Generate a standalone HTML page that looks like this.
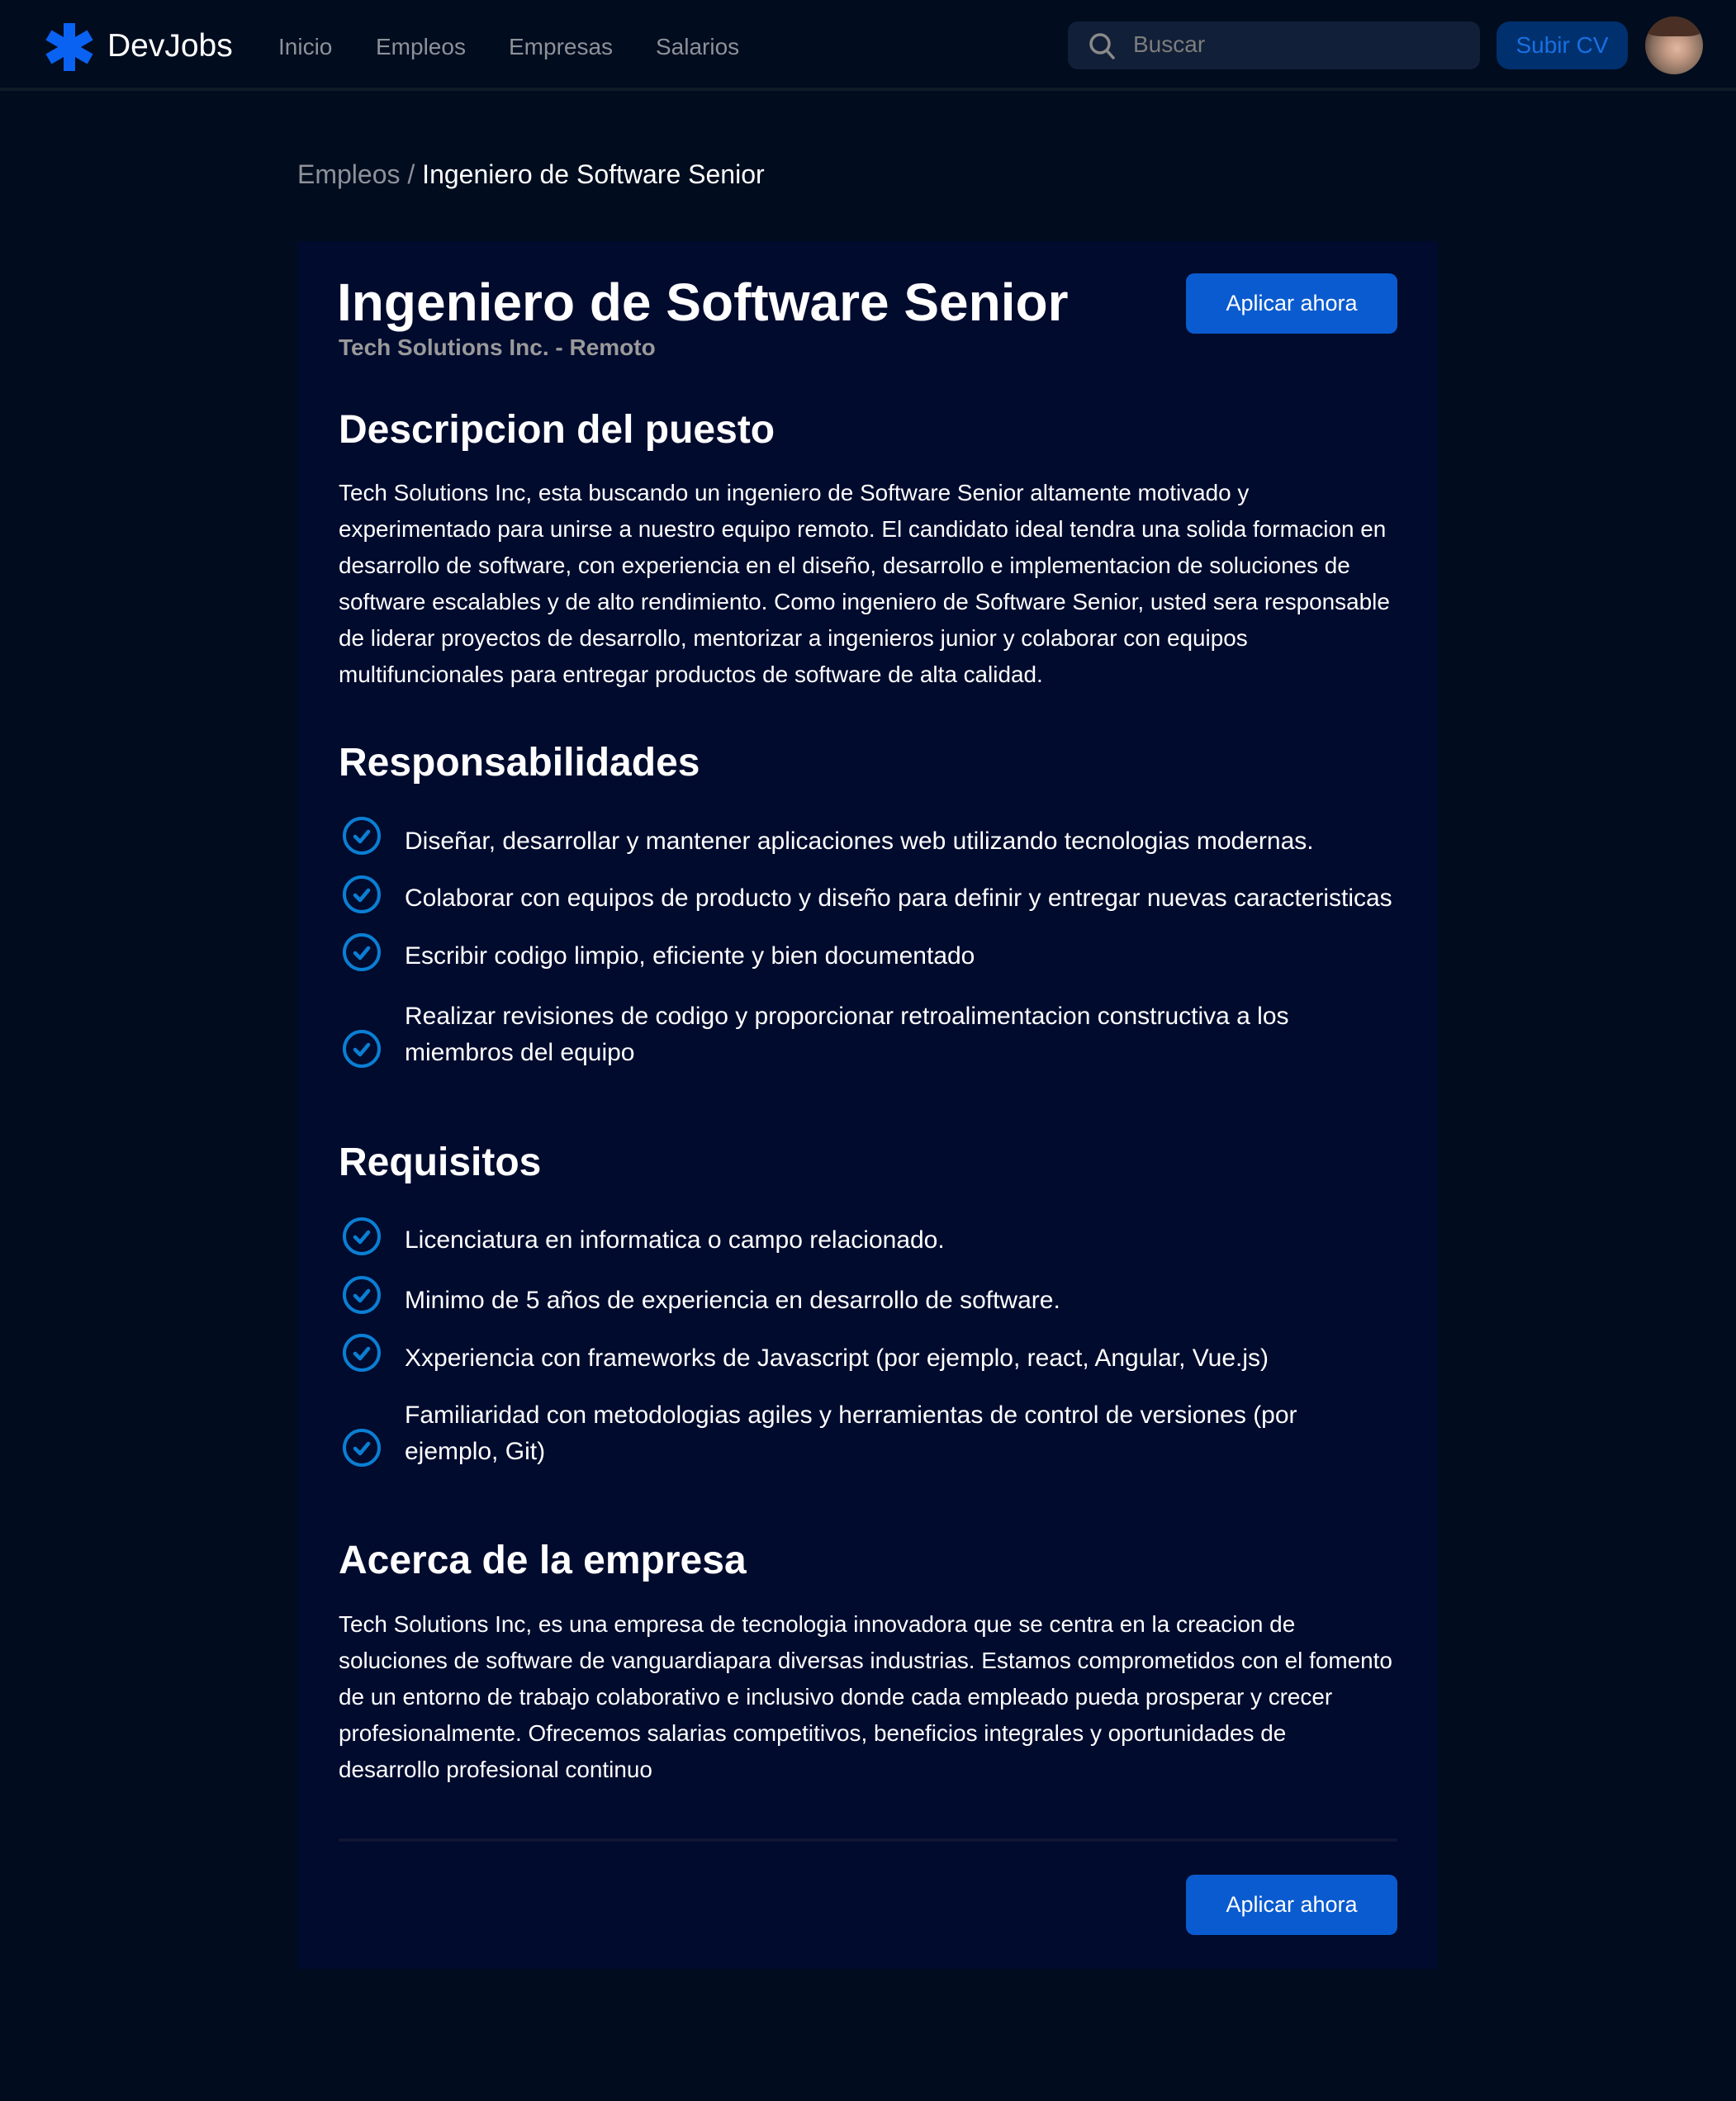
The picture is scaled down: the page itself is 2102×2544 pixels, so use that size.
<!DOCTYPE html>
<html><head><meta charset="utf-8"><style>
*{margin:0;padding:0;box-sizing:border-box}
html,body{width:2102px;height:2544px;background:#010c1e;overflow:hidden}
body{font-family:"Liberation Sans",Arial,sans-serif;color:#fff;position:relative}
.a{position:absolute;white-space:nowrap}
.hdr{position:absolute;left:0;top:0;width:2102px;height:110px;border-bottom:4px solid #111a27;background:#010c1e}
.nav{font-size:28px;color:#8d9199;top:41px}
.card{position:absolute;left:360px;top:292px;width:1381px;height:2092px;background:#000b2e}
.h2{font-size:48px;font-weight:bold;line-height:60px}
.p{font-size:27.9px;line-height:44px;white-space:normal;width:1284px}
.li{font-size:30px;line-height:44px}
.btn{position:absolute;left:1436px;width:256px;height:73px;background:#0a5bcf;border-radius:10px;font-size:27px;text-align:center;line-height:73px;color:#fff}
.ic{position:absolute;left:414px;width:48px;height:48px}
</style></head><body>
<div class="hdr">
<svg class="a" style="left:55px;top:28px" width="58" height="58" viewBox="0 0 58 58"><g fill="#0a62f2"><rect x="22" y="0" width="14" height="58"/><rect x="22" y="0" width="14" height="58" transform="rotate(60 29 29)"/><rect x="22" y="0" width="14" height="58" transform="rotate(-60 29 29)"/></g></svg>
<div class="a" style="left:130px;top:34px;font-size:39px">DevJobs</div>
<div class="a nav" style="left:337px">Inicio</div>
<div class="a nav" style="left:455px">Empleos</div>
<div class="a nav" style="left:616px">Empresas</div>
<div class="a nav" style="left:794px">Salarios</div>
<div class="a" style="left:1293px;top:26px;width:499px;height:58px;background:#111f38;border-radius:12px"></div>
<svg class="a" style="left:1315px;top:36px" width="40" height="40" viewBox="0 0 40 40"><circle cx="17" cy="17" r="11" fill="none" stroke="#8a8a8a" stroke-width="3.5"/><line x1="25" y1="25" x2="33" y2="34" stroke="#8a8a8a" stroke-width="3.5" stroke-linecap="round"/></svg>
<div class="a" style="left:1372px;top:38px;font-size:28px;color:#7d7d7d">Buscar</div>
<div class="a" style="left:1812px;top:26px;width:159px;height:58px;background:#00306e;border-radius:16px;color:#1870e2;font-size:28px;text-align:center;line-height:58px">Subir CV</div>
<div class="a" style="left:1992px;top:20px;width:70px;height:70px;border-radius:50%;background:radial-gradient(circle at 55% 55%,#e0b8a0 0,#c49a84 25%,#8a7060 55%,#3a2a22 85%);overflow:hidden"><div style="position:absolute;left:0;top:0;width:70px;height:24px;background:#4a3024;border-radius:50% 50% 30% 30%"></div></div>
</div>
<div class="a" style="left:360px;top:193px;font-size:32px;color:#8d9199">Empleos / <span style="color:#fff">Ingeniero de Software Senior</span></div>
<div class="card"></div>
<div class="a" style="left:408px;top:328px;font-size:64px;font-weight:bold;line-height:76px">Ingeniero de Software Senior</div>
<div class="a" style="left:410px;top:405px;font-size:28px;font-weight:bold;color:#9a9a9a">Tech Solutions Inc. - Remoto</div>
<div class="btn" style="top:331px">Aplicar ahora</div>
<div class="a h2" style="left:410px;top:491px">Descripcion del puesto</div>
<div class="a p" style="left:410px;top:575px">Tech Solutions Inc, esta buscando un ingeniero de Software Senior altamente motivado y<br>experimentado para unirse a nuestro equipo remoto. El candidato ideal tendra una solida formacion en<br>desarrollo de software, con experiencia en el diseño, desarrollo e implementacion de soluciones de<br>software escalables y de alto rendimiento. Como ingeniero de Software Senior, usted sera responsable<br>de liderar proyectos de desarrollo, mentorizar a ingenieros junior y colaborar con equipos<br>multifuncionales para entregar productos de software de alta calidad.</div>
<div class="a h2" style="left:410px;top:894px">Responsabilidades</div>
<div class="a li" style="left:490px;top:997px">Diseñar, desarrollar y mantener aplicaciones web utilizando tecnologias modernas.</div>
<div class="a li" style="left:490px;top:1066px">Colaborar con equipos de producto y diseño para definir y entregar nuevas caracteristicas</div>
<div class="a li" style="left:490px;top:1136px">Escribir codigo limpio, eficiente y bien documentado</div>
<div class="a li" style="left:490px;top:1209px">Realizar revisiones de codigo y proporcionar retroalimentacion constructiva a los<br>miembros del equipo</div>
<div class="a h2" style="left:410px;top:1378px">Requisitos</div>
<div class="a li" style="left:490px;top:1480px">Licenciatura en informatica o campo relacionado.</div>
<div class="a li" style="left:490px;top:1553px">Minimo de 5 años de experiencia en desarrollo de software.</div>
<div class="a li" style="left:490px;top:1623px">Xxperiencia con frameworks de Javascript (por ejemplo, react, Angular, Vue.js)</div>
<div class="a li" style="left:490px;top:1692px">Familiaridad con metodologias agiles y herramientas de control de versiones (por<br>ejemplo, Git)</div>
<div class="a h2" style="left:410px;top:1860px">Acerca de la empresa</div>
<div class="a p" style="left:410px;top:1945px">Tech Solutions Inc, es una empresa de tecnologia innovadora que se centra en la creacion de<br>soluciones de software de vanguardiapara diversas industrias. Estamos comprometidos con el fomento<br>de un entorno de trabajo colaborativo e inclusivo donde cada empleado pueda prosperar y crecer<br>profesionalmente. Ofrecemos salarias competitivos, beneficios integrales y oportunidades de<br>desarrollo profesional continuo</div>
<div class="a" style="left:410px;top:2226px;width:1282px;height:4px;background:#0f1634"></div>
<div class="btn" style="top:2270px">Aplicar ahora</div>
<svg width="0" height="0" style="position:absolute"><defs><g id="ck"><circle cx="24" cy="24" r="21" fill="none" stroke="#0a7fd4" stroke-width="4"/><path d="M16 25 L22 31 L32 19" fill="none" stroke="#0a7fd4" stroke-width="4.5" stroke-linecap="round" stroke-linejoin="round"/></g></defs></svg>
<svg class="ic" style="top:988px"><use href="#ck"/></svg>
<svg class="ic" style="top:1059px"><use href="#ck"/></svg>
<svg class="ic" style="top:1129px"><use href="#ck"/></svg>
<svg class="ic" style="top:1246px"><use href="#ck"/></svg>
<svg class="ic" style="top:1473px"><use href="#ck"/></svg>
<svg class="ic" style="top:1544px"><use href="#ck"/></svg>
<svg class="ic" style="top:1614px"><use href="#ck"/></svg>
<svg class="ic" style="top:1729px"><use href="#ck"/></svg>
</body></html>
